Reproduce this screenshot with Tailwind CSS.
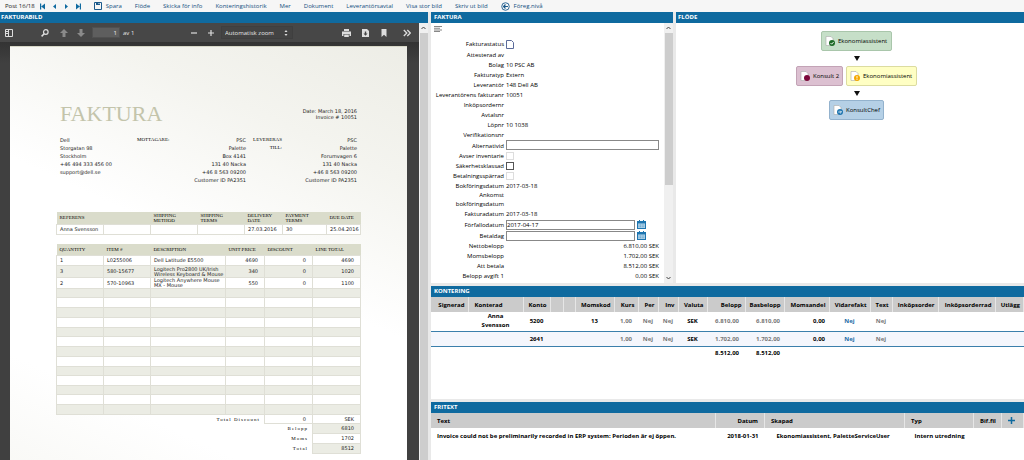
<!DOCTYPE html>
<html lang="sv">
<head>
<meta charset="utf-8">
<title>Faktura</title>
<script src="https://cdn.jsdelivr.net/npm/@tailwindcss/browser@4"></script>
</head>
<body class="flex h-screen flex-col overflow-hidden bg-[#e9e9e9] font-['Open_Sans',sans-serif] text-[6px] leading-[10px] text-black">

<nav class="flex h-3 shrink-0 items-center gap-[13px] bg-[#f6f6f6] pl-[5px] text-[#134f80]">
  <div class="flex items-center gap-[5px]">
    <span class="text-[#222]">Post 16/18</span>
    <div class="flex items-center gap-[7px]">
    <button aria-label="Första"><svg class="h-[7px] w-[5px]" viewBox="0 0 5 7" fill="#0f6aa0"><path d="M0 .5h1.200v6H0zM5 .5v6L1.200 3.500z"/></svg></button>
    <button aria-label="Föregående"><svg class="h-[7px] w-[5px]" viewBox="0 0 5 7" fill="#0f6aa0"><path d="M4 1v5L1 3.500z"/></svg></button>
    <button aria-label="Nästa"><svg class="h-[7px] w-[5px]" viewBox="0 0 5 7" fill="#0f6aa0"><path d="M1 1v5l3-2.500z"/></svg></button>
    <button aria-label="Sista"><svg class="h-[7px] w-[5px]" viewBox="0 0 5 7" fill="#0f6aa0"><path d="M3.800 .5H5v6H3.800zM0 .5v6l3.800-3z"/></svg></button>
    </div>
  </div>
  <button class="flex items-center gap-1"><svg class="size-2" viewBox="0 0 8 8"><path d="M.5.5h7v7h-7z" fill="#f6f6f6" stroke="#1b5a8c"/><path d="M2 0h4v3H2z" fill="#1b5a8c"/><path d="M4.500 1h1v1h-1z" fill="#fff"/></svg>Spara</button>
  <button>Flöde</button>
  <button>Skicka för info</button>
  <button>Konteringshistorik</button>
  <button>Mer</button>
  <button>Dokument</button>
  <button>Leverantörsavtal</button>
  <button>Visa stor bild</button>
  <button>Skriv ut bild</button>
  <button class="flex items-center gap-1"><svg class="size-[9px]" viewBox="0 0 10 10" fill="none" stroke="#1b5a8c"><circle cx="5" cy="5" r="4.200"/><path d="M7.800 5H3M5 2.800L2.800 5 5 7.200" stroke-width="1.300"/></svg>Föreg.nivå</button>
</nav>

<div class="flex min-h-0 flex-1 gap-[3px]">

  <section class="flex w-[428px] shrink-0 flex-col">
    <h2 class="h-[11px] shrink-0 bg-[#0f6a9f] pl-px font-bold text-white">FAKTURABILD</h2>
    <div class="flex min-h-0 flex-1">
      <div class="flex min-w-0 flex-1 flex-col bg-[#3b3b3b]">
        <div class="flex h-[19px] shrink-0 items-center bg-[#474747] pr-2 pl-[5px] text-[#e6e6e6]">
          <button aria-label="Sidofält"><svg class="h-2 w-2" viewBox="0 0 8 8" fill="none" stroke="#ddd"><path d="M.5.5h7v7h-7zM3.500 0v8"/><path d="M1 2.500h2M1 4.500h2"/></svg></button>
          <button aria-label="Sök" class="ml-7"><svg class="h-2 w-2" viewBox="0 0 8 8" fill="none" stroke="#ddd"><circle cx="4.800" cy="3" r="2.300" stroke-width="1.200"/><path d="M3.200 4.800L.6 7.400" stroke-width="1.500"/></svg></button>
          <button aria-label="Föregående sida" class="ml-[11px]"><svg class="h-2 w-2" viewBox="0 0 8 8" fill="#8a8a8a"><path d="M4 0l4 4H5.500v4h-3V4H0z"/></svg></button>
          <button aria-label="Nästa sida" class="ml-[9px]"><svg class="h-2 w-2" viewBox="0 0 8 8" fill="#8a8a8a"><path d="M4 8L0 4h2.500V0h3v4H8z"/></svg></button>
          <input aria-label="Sida" value="1" class="ml-[7px] h-[11px] w-7 border border-[#505050] bg-[#5e5e5e] pr-0.5 text-right text-[#eee]">
          <span class="ml-[3px]">av 1</span>
          <button aria-label="Zooma ut" class="ml-auto"><svg class="h-2 w-2" viewBox="0 0 8 8" stroke="#ddd" stroke-width="1.200"><path d="M1 4h6"/></svg></button>
          <button aria-label="Zooma in" class="ml-[9px]"><svg class="h-2 w-2" viewBox="0 0 8 8" stroke="#ddd" stroke-width="1.200"><path d="M1 4h6M4 1v6"/></svg></button>
          <div class="relative ml-1.5 flex h-[13px] w-[72px] items-center border border-[#3f3f3f] bg-[#434343]">
            <select aria-label="Zoom" class="w-full appearance-none pl-[3px] text-[#e6e6e6]"><option>Automatisk zoom</option></select>
            <svg class="pointer-events-none absolute right-1 h-1.5 w-1" viewBox="0 0 4 6" fill="#ddd"><path d="M2 0l1.500 2h-3zM2 6L.5 4h3z"/></svg>
          </div>
          <button aria-label="Skriv ut" class="ml-[49px]"><svg class="h-2 w-[9px]" viewBox="0 0 9 8" fill="#ddd"><path d="M2 0h5v2H2zM0 2.500h9V7H7.500V5h-6v2H0zM2.200 5.500h4.600V8H2.200z"/></svg></button>
          <button aria-label="Hämta" class="ml-[11px]"><svg class="h-2 w-[7px]" viewBox="0 0 7 8"><path d="M0 0h5l2 2v6H0z" fill="#ddd"/><path d="M2.800 2.500h1.400v2h1.300l-2 2.200-2-2.200h1.300z" fill="#444"/></svg></button>
          <button aria-label="Bokmärke" class="ml-3"><svg class="h-2 w-[6px]" viewBox="0 0 6 8" fill="#ddd"><path d="M.5 0h5v8L3 5.800.5 8z"/></svg></button>
          <button aria-label="Verktyg" class="ml-4"><svg class="h-2 w-2" viewBox="0 0 8 8" fill="none" stroke="#ddd" stroke-width="1.300"><path d="M.8 1l3 3-3 3M4.300 1l3 3-3 3"/></svg></button>
        </div>

        <div class="min-h-0 flex-1 overflow-hidden bg-linear-to-b from-[#333] to-[#404040] to-5% pt-1 pr-3 pl-[10px]">
          <article class="min-h-[430px] border-t border-[#d8d8c8] bg-white bg-linear-[205deg,#edede6_0%,#f4f4ef_22%,#fff_48%,#fff_80%,#f8f8f5_100%] pt-[57px] pr-[46px] pl-[46px] font-['DejaVu_Sans',sans-serif] text-[5px] leading-[6px] text-[#222]">
            <header class="flex justify-between pl-1">
              <h1 class="font-['Liberation_Serif',serif] text-[22px] leading-5 text-[#c3c4ab]">FAKTURA</h1>
              <p class="pt-1 pr-1 text-right">Date: March 18, 2016<br>Invoice # 10051</p>
            </header>
            <div class="mt-3 flex h-[76px] pr-1 pl-1 leading-[8px]">
              <p class="w-[77px]">Dell<br>Storgatan 98<br>Stockholm<br>+46 494 333 456 00<br>support@dell.se</p>
              <p class="w-[50px] font-['Liberation_Serif',serif] text-black">MOTTAGARE:</p>
              <p class="flex-1 text-right">PSC<br>Palette<br>Box 4141<br>131 40 Nacka<br>+46 8 563 09200<br>Customer ID PA2351</p>
              <p class="w-[36px] text-right font-['Liberation_Serif',serif] text-black">LEVERERAS<br>TILL:</p>
              <p class="w-[75px] text-right">PSC<br>Palette<br>Forumvagen 6<br>131 40 Nacka<br>+46 8 563 09200<br>Customer ID PA2351</p>
            </div>
            <table class="w-full table-fixed border-collapse text-left leading-[5px] [&_td]:border [&_td]:border-[#dfdfd6] [&_td]:px-[3px] [&_th]:px-[3px] [&_th]:font-normal [&_th]:text-black">
              <colgroup><col class="w-[47px]"><col class="w-[47px]"><col class="w-[47px]"><col class="w-[47px]"><col class="w-[38px]"><col class="w-[44px]"><col></colgroup>
              <thead class="bg-[#dadccb] font-['Liberation_Serif',serif]"><tr class="h-3"><th>REFERENS</th><th></th><th>SHIPPING<br>METHOD</th><th>SHIPPING<br>TERMS</th><th>DELIVERY<br>DATE</th><th>PAYMENT<br>TERMS</th><th class="whitespace-nowrap">DUE DATE</th></tr></thead>
              <tbody class="bg-white"><tr class="h-[10px]"><td class="whitespace-nowrap">Anna Svensson</td><td></td><td></td><td></td><td>27.03.2016</td><td>30</td><td class="whitespace-nowrap">25.04.2016</td></tr></tbody>
            </table>
            <table class="mt-[9px] w-full table-fixed border-collapse text-left leading-[5px] [&_td]:border [&_td]:border-[#dfdfd6] [&_td]:px-[3px] [&_th]:px-[3px] [&_th]:font-normal [&_th]:text-black">
              <colgroup><col class="w-[47px]"><col class="w-[47px]"><col class="w-[75px]"><col class="w-[39px]"><col class="w-12"><col></colgroup>
              <thead class="bg-[#dadccb] font-['Liberation_Serif',serif] whitespace-nowrap"><tr class="h-3"><th>QUANTITY</th><th>ITEM #</th><th>DESCRIPTION</th><th>UNIT PRICE</th><th>DISCOUNT</th><th>LINE TOTAL</th></tr></thead>
              <tbody class="bg-white [&_tr:nth-child(even)]:bg-[#ebece4] [&_td:nth-child(n+4)]:pr-1.5 [&_td:nth-child(n+4)]:text-right">
                <tr class="h-[10px]"><td>1</td><td>L0255006</td><td>Dell Latitude E5500</td><td>4690</td><td>0</td><td>4690</td></tr>
                <tr class="h-[12px]"><td>3</td><td>580-15677</td><td class="whitespace-nowrap">Logitech Pro2800 UK/Irish<br>Wireless Keyboard &amp; Mouse</td><td>340</td><td>0</td><td>1020</td></tr>
                <tr class="h-[11px]"><td>2</td><td>570-10963</td><td>Logitech Anywhere Mouse<br>MX - Mouse</td><td>550</td><td>0</td><td>1100</td></tr>
                <tr class="h-[9px]"><td></td><td></td><td></td><td></td><td></td><td></td></tr>
                <tr class="h-[10px]"><td></td><td></td><td></td><td></td><td></td><td></td></tr>
                <tr class="h-[10px]"><td></td><td></td><td></td><td></td><td></td><td></td></tr>
                <tr class="h-[10px]"><td></td><td></td><td></td><td></td><td></td><td></td></tr>
                <tr class="h-[9px]"><td></td><td></td><td></td><td></td><td></td><td></td></tr>
                <tr class="h-[10px]"><td></td><td></td><td></td><td></td><td></td><td></td></tr>
                <tr class="h-[10px]"><td></td><td></td><td></td><td></td><td></td><td></td></tr>
                <tr class="h-[10px]"><td></td><td></td><td></td><td></td><td></td><td></td></tr>
                <tr class="h-[9px]"><td></td><td></td><td></td><td></td><td></td><td></td></tr>
                <tr class="h-[10px]"><td></td><td></td><td></td><td></td><td></td><td></td></tr>
                <tr class="h-[9px]"><td></td><td></td><td></td><td></td><td></td><td></td></tr>
                <tr class="h-[10px]"><td></td><td></td><td></td><td></td><td></td><td></td></tr>
                <tr class="h-[10px]"><td></td><td></td><td></td><td></td><td></td><td></td></tr>
              </tbody>
              <tfoot class="text-right [&_td]:pr-1.5 [&_th]:pr-1 [&_th]:text-right [&_th]:font-['Liberation_Serif',serif] [&_th]:tracking-[1px]">
                <tr class="h-[9px]"><th colspan="4">Total Discount</th><td class="bg-white">0</td><td class="bg-white">SEK</td></tr>
                <tr class="h-[10px]"><th colspan="5">Belopp</th><td class="bg-[#ebece4]">6810</td></tr>
                <tr class="h-[10px]"><th colspan="5">Moms</th><td class="bg-white">1702</td></tr>
                <tr class="h-[10px]"><th colspan="5">Total</th><td class="bg-[#ebece4]">8512</td></tr>
              </tfoot>
            </table>
          </article>
        </div>
      </div>
      <div class="flex w-[9px] shrink-0 flex-col items-center bg-[#f0f0f0]">
        <svg class="my-0.5 h-1.5 w-[5px] shrink-0" viewBox="0 0 5 6" fill="none" stroke="#444"><path d="M.5 4l2-2 2 2"/></svg>
        <div class="w-2 flex-1 bg-[#cdcdcd]"></div>
      </div>
    </div>
  </section>

  <div class="flex min-w-0 flex-1 flex-col gap-[3px]">
    <div class="flex h-[271px] shrink-0 gap-[3px]">
      <section class="flex w-[242px] shrink-0 flex-col bg-white">
        <h2 class="h-[11px] shrink-0 bg-[#0f6a9f] pl-[3px] font-bold text-white">FAKTURA</h2>
        <div class="flex min-h-0 flex-1">
          <form class="min-w-0 flex-1 pr-[5px] pl-[3px]">
            <button type="button" aria-label="Meny" class="mb-1 flex h-[11px] items-center"><svg class="h-1.5 w-2" viewBox="0 0 8 6" fill="#888"><path d="M0 0h8v1H0zM0 1.700h6v1H0zM0 3.400h8v1H0zM0 5h6v1H0z"/></svg></button>
            <div class="grid grid-cols-[70px_1fr] items-center gap-x-0.5 [&_label]:text-right [&_label]:whitespace-nowrap">
              <label>Fakturastatus</label><span class="flex h-3 items-center"><svg class="h-[9px] w-2" viewBox="0 0 8 9" fill="#fff" stroke="#5b6b9a"><path d="M.5.5h5l2 2v6h-7z"/></svg></span>
              <label>Attesterad av</label><span></span>
              <label>Bolag</label><span>10 PSC AB</span>
              <label>Fakturatyp</label><span>Extern</span>
              <label>Leverantör</label><span>148 Dell AB</span>
              <label>Leverantörens fakturanr</label><span>10051</span>
              <label>Inköpsordernr</label><span></span>
              <label>Avtalsnr</label><span></span>
              <label>Löpnr</label><span>10 1038</span>
              <label>Verifikationsnr</label><span></span>
              <label for="alt">Alternativid</label><input id="alt" class="mb-px h-[10px] w-full border border-[#888] bg-white">
              <label for="inv">Avser inventarie</label><input id="inv" type="checkbox" disabled class="size-2 appearance-none border border-[#ddd]">
              <label for="sak">Säkerhetsklassad</label><input id="sak" type="checkbox" class="size-2 appearance-none border border-[#555]">
              <label for="bet">Betalningsspärrad</label><input id="bet" type="checkbox" disabled class="size-2 appearance-none border border-[#ddd]">
              <label>Bokföringsdatum</label><span>2017-03-18</span>
              <label class="leading-[9px]">Ankomst<br>bokföringsdatum</label><span></span>
              <label>Fakturadatum</label><span>2017-03-18</span>
              <label for="ffd">Förfallodatum</label><span class="flex items-center gap-0.5 pr-[13px]"><input id="ffd" value="2017-04-17" class="mt-px h-[10px] min-w-0 flex-1 border border-[#888] bg-white"><button type="button" aria-label="Välj datum"><svg class="size-[9px]" viewBox="0 0 9 9"><path d="M0 1h9v8H0z" fill="#1d75b0"/><path d="M1 3.500h7V8H1z" fill="#b9d8ec"/><path d="M1.500 5h6M1.500 6.800h6" stroke="#1d75b0" stroke-width=".7" stroke-dasharray="1 .6"/><path d="M2 0h1v2H2zM6 0h1v2H6z" fill="#1d75b0"/></svg></button></span>
              <label for="btd">Betaldag</label><span class="flex items-center gap-0.5 pr-[13px]"><input id="btd" class="mt-px h-[10px] min-w-0 flex-1 border border-[#888] bg-white"><button type="button" aria-label="Välj datum"><svg class="size-[9px]" viewBox="0 0 9 9"><path d="M0 1h9v8H0z" fill="#1d75b0"/><path d="M1 3.500h7V8H1z" fill="#b9d8ec"/><path d="M1.500 5h6M1.500 6.800h6" stroke="#1d75b0" stroke-width=".7" stroke-dasharray="1 .6"/><path d="M2 0h1v2H2zM6 0h1v2H6z" fill="#1d75b0"/></svg></button></span>
              <label>Nettobelopp</label><span class="text-right">6.810,00 SEK</span>
              <label>Momsbelopp</label><span class="text-right">1.702,00 SEK</span>
              <label>Att betala</label><span class="text-right">8.512,00 SEK</span>
              <label>Belopp avgift 1</label><span class="text-right">0,00 SEK</span>
            </div>
          </form>
          <div class="flex w-[9px] shrink-0 flex-col items-center bg-[#f0f0f0]">
            <svg class="my-0.5 h-1.5 w-[5px] shrink-0" viewBox="0 0 5 6" fill="none" stroke="#444"><path d="M.5 4l2-2 2 2"/></svg>
            <div class="h-[152px] w-2 bg-[#cdcdcd]"></div>
            <svg class="mt-auto mb-0.5 h-1.5 w-[5px] shrink-0" viewBox="0 0 5 6" fill="none" stroke="#444"><path d="M.5 2l2 2 2-2"/></svg>
          </div>
        </div>
      </section>

      <section class="flex min-w-0 flex-1 flex-col bg-white">
        <h2 class="h-[11px] shrink-0 bg-[#0f6a9f] pl-0.5 font-bold text-white">FLÖDE</h2>
        <div class="flex flex-col items-center pt-2 pl-[13px]">
          <button class="flex h-5 w-[71px] items-center gap-0.5 rounded-xs border border-[#a9c6ab] bg-[#c6dfc8] pl-[3px]"><svg class="size-[11px] shrink-0" viewBox="0 0 11 11"><path d="M1 .5h5l2 2v7H1z" fill="#fff" stroke="#aaa" stroke-width=".6"/><circle cx="7" cy="7" r="3" fill="#1c6b25"/><path d="M5.500 7l1.200 1.200L8.600 6" stroke="#fff" stroke-width=".9" fill="none"/></svg>Ekonomiassistent</button>
          <svg class="my-[5px] h-[5px] w-[6px]" viewBox="0 0 6 5"><path d="M0 0h6L3 5z" fill="#111"/></svg>
          <div class="flex gap-[3px]">
            <button class="flex h-5 w-[47px] items-center gap-0.5 rounded-xs border border-[#c3a3b6] bg-[#dcc0d1] pl-[3px] whitespace-nowrap"><svg class="size-[11px] shrink-0" viewBox="0 0 11 11"><path d="M1 .5h5l2 2v7H1z" fill="#fff" stroke="#aaa" stroke-width=".6"/><circle cx="7" cy="7" r="3" fill="#7d0a3c"/></svg>Konsult 2</button>
            <button class="flex h-5 w-[71px] items-center gap-0.5 rounded-xs border border-[#dcdca0] bg-[#ffffc4] pl-[3px]"><svg class="size-[11px] shrink-0" viewBox="0 0 11 11"><path d="M1 .5h5l2 2v7H1z" fill="#fff" stroke="#aaa" stroke-width=".6"/><circle cx="7" cy="7" r="3" fill="#f5a800"/><path d="M7 5v2.500M7 8.100v.9" stroke="#fff" stroke-width=".9"/></svg>Ekonomiassistent</button>
          </div>
          <svg class="mt-[5px] mb-1 h-[5px] w-[6px]" viewBox="0 0 6 5"><path d="M0 0h6L3 5z" fill="#111"/></svg>
          <button class="flex h-5 w-[55px] items-center gap-0.5 rounded-xs border border-[#93b2cd] bg-[#b5d0e6] pl-[3px]"><svg class="size-[11px] shrink-0" viewBox="0 0 11 11"><path d="M1 .5h5l2 2v7H1z" fill="#fff" stroke="#aaa" stroke-width=".6"/><circle cx="7" cy="7" r="3" fill="#1d75b0"/><path d="M5.300 7h3M7.200 5.700L8.500 7 7.200 8.300" stroke="#fff" stroke-width=".8" fill="none"/></svg>KonsultChef</button>
        </div>
      </section>
    </div>

    <section class="h-[113px] shrink-0 bg-white">
      <h2 class="h-[11px] bg-[#0f6a9f] pl-[3px] font-bold text-white">KONTERING</h2>
      <table class="w-full table-fixed border-collapse text-center font-bold [&_th]:border-r [&_th]:border-[#e6e6e6] [&_th]:pr-[3px] [&_th]:text-right [&_th]:whitespace-nowrap">
        <colgroup><col class="w-[37px]"><col class="w-[55px]"><col class="w-[27px]"><col class="w-[13px]"><col class="w-3"><col class="w-[39px]"><col class="w-6"><col class="w-5"><col class="w-5"><col class="w-[29px]"><col class="w-[38px]"><col class="w-[39px]"><col class="w-[45px]"><col class="w-[41px]"><col class="w-[22px]"><col class="w-[46px]"><col class="w-[57px]"><col></colgroup>
        <thead class="bg-[#cbcbcb]"><tr class="h-[15px]"><th>Signerad</th><th><span class="block pl-1.5 text-left">Konterad</span></th><th>Konto</th><th></th><th></th><th>Momskod</th><th>Kurs</th><th>Per</th><th>Inv</th><th>Valuta</th><th>Belopp</th><th>Basbelopp</th><th>Momsandel</th><th>Vidarefakt</th><th>Text</th><th>Inköpsorder</th><th>Inköpsorderrad</th><th>Utlägg</th></tr></thead>
        <tbody class="[&_tr]:border-b [&_tr]:border-[#3b7fab]">
          <tr class="h-[19px] leading-[9px]"><td></td><td>Anna<br>Svensson</td><td>5200</td><td></td><td></td><td>13</td><td class="text-[#777]">1,00</td><td class="text-[#777]">Nej</td><td class="text-[#777]">Nej</td><td>SEK</td><td class="pr-1.5 text-right text-[#777]">6.810,00</td><td class="pr-1 text-right text-[#777]">6.810,00</td><td class="pr-1 text-right">0,00</td><td><a href="#" class="text-[#1b6aa5]">Nej</a></td><td class="text-[#777]">Nej</td><td></td><td></td><td></td></tr>
          <tr class="h-[15px] bg-[#f4f6fc]"><td></td><td></td><td>2641</td><td></td><td></td><td></td><td class="text-[#777]">1,00</td><td class="text-[#777]">Nej</td><td class="text-[#777]">Nej</td><td>SEK</td><td class="pr-1.5 text-right text-[#777]">1.702,00</td><td class="pr-1 text-right text-[#777]">1.702,00</td><td class="pr-1 text-right">0,00</td><td><a href="#" class="text-[#1b6aa5]">Nej</a></td><td class="text-[#777]">Nej</td><td></td><td></td><td></td></tr>
        </tbody>
        <tfoot><tr class="h-[14px]"><td colspan="10"></td><td class="pr-1.5 text-right">8.512,00</td><td class="pr-1 text-right">8.512,00</td><td colspan="6"></td></tr></tfoot>
      </table>
    </section>

    <section class="min-h-0 flex-1 bg-white">
      <h2 class="h-[11px] bg-[#0f6a9f] pl-[3px] font-bold text-white">FRITEXT</h2>
      <table class="w-full table-fixed border-collapse text-left font-bold whitespace-nowrap [&_th]:border-r [&_th]:border-[#e6e6e6] [&_th]:px-1.5">
        <colgroup><col><col class="w-[49px]"><col class="w-[140px]"><col class="w-[69px]"><col class="w-7"><col class="w-[22px]"></colgroup>
        <thead class="bg-[#cbcbcb]"><tr class="h-[15px]"><th>Text</th><th><span class="block text-right">Datum</span></th><th>Skapad</th><th>Typ</th><th>Bif.fil</th><th><button aria-label="Lägg till" class="block"><svg class="size-[7px]" viewBox="0 0 7 7" stroke="#0f6a9f" stroke-width="1.500"><path d="M0 3.500h7M3.500 0v7"/></svg></button></th></tr></thead>
        <tbody><tr class="h-4"><td class="pl-1.5">Invoice could not be preliminarily recorded in ERP system: Perioden är ej öppen.</td><td class="pr-1.5 text-right">2018-01-31</td><td class="pl-3">Ekonomiassistent, PaletteServiceUser</td><td class="pl-[10px]">Intern utredning</td><td></td><td></td></tr></tbody>
      </table>
    </section>
  </div>
</div>
</body>
</html>
